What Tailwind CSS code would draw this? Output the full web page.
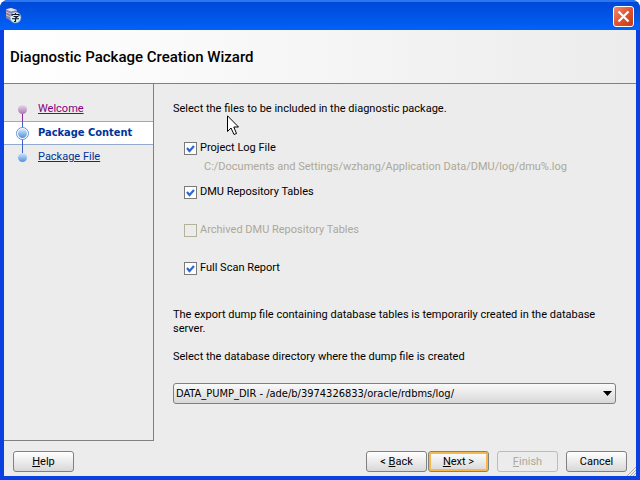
<!DOCTYPE html>
<html lang="en">
<head>
  <meta charset="UTF-8">
  <meta name="viewport" content="width=device-width, initial-scale=1.0">
  <title>Diagnostic Package Creation Wizard</title>
  <script src="https://cdn.jsdelivr.net/npm/@tailwindcss/browser@4"></script>
</head>
<body class="bg-white">
  <div class="relative flex flex-col min-h-screen overflow-hidden rounded-t-lg bg-[#0a3fe0] font-['Roboto',sans-serif] text-[11px] leading-[14px] text-black">

    <!-- title bar -->
    <div class="flex h-[30px] shrink-0 items-center justify-between px-1.5 bg-linear-to-b from-[#0048d8] via-[#0055e6] to-[#0062fa] border-t-2 border-[#2a78f0]">
      <svg class="size-4" viewBox="0 0 16 16">
        <path d="M0 1 L5 0 L11 2 V12 L5 13 L0 10 Z" fill="#8a80b0"/>
        <path d="M0 1.500 L5 0 L11 2 L5 3.500 Z" fill="#e4e0ee"/>
        <path d="M0 4 L5 6 M0 7 L5 9" stroke="#e0c0c0" fill="none"/>
        <circle cx="9.500" cy="9.500" r="5.500" fill="#d4f0f4" stroke="#6a8eb0" stroke-width=".6"/>
        <path d="M9.500 5 V6.500 M6 8 V6.500 H13 V8 M7.500 8.500 H11.500 L9.500 10 V13.500 H8 M6 10.800 H13" stroke="#101828" stroke-width="1.100" fill="none"/>
      </svg>
      <button aria-label="Close" class="flex size-[21px] items-center justify-center rounded-[3px] border border-white bg-linear-to-br from-[#ee8a6c] via-[#e0532f] to-[#c43a12]">
        <svg class="size-[13px]" viewBox="0 0 13 13"><path d="M1.500 1.500 L11.500 11.500 M11.500 1.500 L1.500 11.500" stroke="#fff" stroke-width="2.200"/></svg>
      </button>
    </div>

    <div class="flex grow flex-col mx-1 mb-1 bg-[#ececec]">
      <header class="flex h-[54px] items-center border-b border-[#808080] bg-linear-to-r from-white to-[#ececec] px-1.5">
        <h1 class="text-[15px] leading-5 font-medium">Diagnostic Package Creation Wizard</h1>
      </header>

      <div class="flex grow">
        <!-- wizard steps -->
        <nav class="relative w-[150px] shrink-0 border-r border-b border-[#808080] pt-[13px]">
          <a href="#welcome" class="flex h-6 items-center pl-[34px] text-[#800080] underline">Welcome</a>
          <a href="#content" class="flex h-6 items-center border-y border-[#93a9d0] bg-white pl-[34px] font-['DejaVu_Sans_Condensed','DejaVu_Sans',sans-serif] font-bold text-[#003399]">Package Content</a>
          <a href="#file" class="flex h-6 items-center pl-[34px] text-[#003399] underline">Package File</a>
          <svg class="absolute left-3 top-[13px] h-[72px] w-[14px]" viewBox="0 0 14 72">
            <defs>
              <linearGradient id="visited" x2="0" y2="1"><stop offset="0" stop-color="#e8d8ea"/><stop offset="1" stop-color="#a878b0"/></linearGradient>
              <linearGradient id="step" x2="0" y2="1"><stop offset="0" stop-color="#d4e8fb"/><stop offset="1" stop-color="#4f8fe0"/></linearGradient>
            </defs>
            <path d="M6.500 15 V24" stroke="#8a2a98"/>
            <path d="M6.500 24 V58" stroke="#3a62c8"/>
            <circle cx="6.500" cy="12.500" r="4.500" fill="url(#visited)"/>
            <circle cx="6.500" cy="36.500" r="6" fill="#fff" stroke="#5f95d6"/>
            <circle cx="6.500" cy="36.500" r="4.500" fill="url(#step)"/>
            <circle cx="6.500" cy="60.500" r="4.500" fill="url(#step)"/>
          </svg>
        </nav>

        <main class="grow pt-[18px] pl-[19px] pr-5">
          <p>Select the files to be included in the diagnostic package.</p>

          <div class="mt-[25px] pl-[11px]">
            <label class="relative flex w-fit items-center gap-[3px]">
              <input type="checkbox" checked class="peer size-[13px] appearance-none border border-[#7a7a7a] bg-white">
              <svg class="absolute left-0 hidden size-[13px] peer-checked:block" viewBox="0 0 13 13"><path d="M3 6 L5.500 9 L10 4" stroke="#2f66d0" stroke-width="2.200" fill="none"/></svg>
              Project Log File
            </label>
            <p class="mt-[5px] pl-5 text-[#aca899]">C:/Documents and Settings/wzhang/Application Data/DMU/log/dmu%.log</p>
            <label class="relative mt-[11px] flex w-fit items-center gap-[3px]">
              <input type="checkbox" checked class="peer size-[13px] appearance-none border border-[#7a7a7a] bg-white">
              <svg class="absolute left-0 hidden size-[13px] peer-checked:block" viewBox="0 0 13 13"><path d="M3 6 L5.500 9 L10 4" stroke="#2f66d0" stroke-width="2.200" fill="none"/></svg>
              DMU Repository Tables
            </label>
            <label class="relative mt-6 flex w-fit items-center gap-[3px] text-[#aca899]">
              <input type="checkbox" disabled class="size-[13px] appearance-none border border-[#b5b29c]">
              Archived DMU Repository Tables
            </label>
            <label class="relative mt-6 flex w-fit items-center gap-[3px]">
              <input type="checkbox" checked class="peer size-[13px] appearance-none border border-[#7a7a7a] bg-white">
              <svg class="absolute left-0 hidden size-[13px] peer-checked:block" viewBox="0 0 13 13"><path d="M3 6 L5.500 9 L10 4" stroke="#2f66d0" stroke-width="2.200" fill="none"/></svg>
              Full Scan Report
            </label>
          </div>

          <p class="mt-[33px]">The export dump file containing database tables is temporarily created in the database server.</p>
          <label for="directory" class="mt-3.5 block">Select the database directory where the dump file is created</label>
          <div class="relative mt-[19px]">
            <select id="directory" class="block h-[21px] w-full appearance-none rounded-[3px] border border-[#808080] bg-linear-to-b from-[#fafafa] to-[#d8d8d8] pl-0.5 pr-5 font-['DejaVu_Sans_Condensed','DejaVu_Sans',sans-serif]">
              <option>DATA_PUMP_DIR - /ade/b/3974326833/oracle/rdbms/log/</option>
            </select>
            <svg class="pointer-events-none absolute right-1 top-2 h-[5px] w-[9px]" viewBox="0 0 9 5"><path d="M0 0 H9 L4.500 5 Z"/></svg>
          </div>
        </main>
      </div>

      <footer class="flex h-[35px] items-center justify-between px-[9px] pt-1.5">
        <button class="h-[21px] w-[61px] rounded-[3px] border border-[#808080] bg-linear-to-b from-white to-[#d8d8d8]"><u>H</u>elp</button>
        <div class="flex">
          <button class="h-[21px] w-[61px] rounded-[3px] border border-[#808080] bg-linear-to-b from-white to-[#d8d8d8]">&lt; <u>B</u>ack</button>
          <button class="ml-px h-[21px] w-[61px] rounded-[3px] border border-[#808080] bg-linear-to-b from-white to-[#d8d8d8] inset-ring-2 inset-ring-[#f5b84c]"><u>N</u>ext &gt;</button>
          <button disabled class="ml-2 h-[21px] w-[61px] rounded-[3px] border border-[#c0bda8] text-[#aca899]"><u>F</u>inish</button>
          <button class="ml-2 h-[21px] w-[61px] rounded-[3px] border border-[#808080] bg-linear-to-b from-white to-[#d8d8d8]">Cancel</button>
        </div>
      </footer>
    </div>

    <!-- resize grip -->
    <svg class="absolute bottom-1 right-1 size-[9px]" viewBox="0 0 9 9"><path d="M0 9 L9 0 M3 9 L9 3 M6 9 L9 6" stroke="#b0ad98"/></svg>

    <!-- mouse pointer -->
    <svg class="absolute left-[227px] top-[115px] h-[21px] w-3" viewBox="0 0 12 21"><path d="M.5 .8 V16.500 L4 13 L7 19.500 L9.500 18.500 L6.800 12 H11.500 Z" fill="#fff" stroke="#000"/></svg>
  </div>
</body>
</html>
